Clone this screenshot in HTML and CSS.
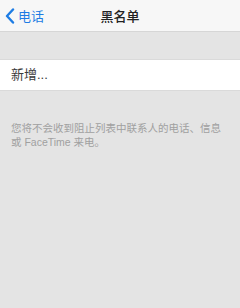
FILE: index.html
```html
<!DOCTYPE html>
<html lang="zh-CN">
<head>
    <meta charset="UTF-8">
    <meta name="viewport" content="width=device-width, initial-scale=1.0">
    <title>黑名单</title>
    <link rel="stylesheet" href="styles.css">
</head>
<body>
    <header class="navbar">
        <a class="back" href="#">
            <svg class="chevron" width="10" height="16" viewBox="0 0 10 16">
                <path d="M8 1.5 L2 8 L8 14.5" fill="none" stroke="#1d7ce4" stroke-width="2.4" stroke-linecap="round" stroke-linejoin="round"/>
            </svg>
            <span>电话</span>
        </a>
        <h1 class="title">黑名单</h1>
    </header>

    <div class="group">
        <div class="cell">新增...</div>
    </div>

    <p class="footnote">您将不会收到阻止列表中联系人的电话、信息或 FaceTime 来电。</p>
</body>
</html>
```

FILE: styles.css
```css
body {
  margin: 0;
  padding: 0;
  background: #e4e4e4;
  font-family: "Liberation Sans", "Noto Sans CJK SC", sans-serif;
  width: 240px;
  min-height: 308px;
}

.navbar {
  position: relative;
  height: 31px;
  background: #f7f7f7;
  border-bottom: 1px solid #d6d6d6;
  display: flex;
  align-items: center;
}

.back {
  display: flex;
  align-items: center;
  gap: 3px;
  padding-left: 5px;
  color: #1d7ce4;
  text-decoration: none;
  font-size: 13px;
}

.title {
  position: absolute;
  left: 0;
  right: 0;
  margin: 0;
  text-align: center;
  font-size: 13px;
  font-weight: 500;
  color: #222;
  pointer-events: none;
}

.group {
  margin-top: 27px;
  background: #fff;
  border-top: 1px solid #dadada;
  border-bottom: 1px solid #dadada;
}

.cell {
  height: 30px;
  line-height: 30px;
  padding-left: 11px;
  font-size: 13px;
  color: #3a3a3a;
}

.footnote {
  margin: 0;
  padding: 30px 12px 0 11px;
  font-size: 10.5px;
  line-height: 14px;
  color: #a0a0a0;
}
```
